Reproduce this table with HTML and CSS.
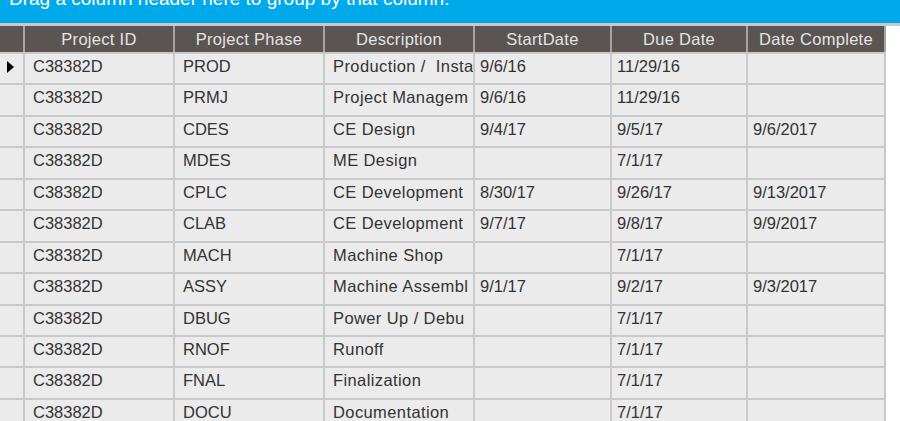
FILE: index.html
```html
<!DOCTYPE html>
<html>
<head>
<meta charset="utf-8">
<link rel="stylesheet" href="styles.css">
</head>
<body>
<div class="group-band"><div class="group-text">Drag a column header here to group by that column.</div></div>
<div class="grid-wrap">
<table class="grid">
<colgroup>
<col class="c-sel"><col class="c-id"><col class="c-phase"><col class="c-desc"><col class="c-start"><col class="c-due"><col class="c-done">
</colgroup>
<thead>
<tr><th></th><th>Project ID</th><th>Project Phase</th><th>Description</th><th>StartDate</th><th>Due Date</th><th>Date Complete</th></tr>
</thead>
<tbody>
<tr><td class="sel"><span class="arrow"></span></td><td><div class="cell pad9">C38382D</div></td><td><div class="cell pad9">PROD</div></td><td><div class="cell pad9 desc">Production /&nbsp; Insta</div></td><td><div class="cell pad6">9/6/16</div></td><td><div class="cell pad6">11/29/16</div></td><td><div class="cell pad6"></div></td></tr>
<tr><td class="sel"></td><td><div class="cell pad9">C38382D</div></td><td><div class="cell pad9">PRMJ</div></td><td><div class="cell pad9 desc">Project Managem</div></td><td><div class="cell pad6">9/6/16</div></td><td><div class="cell pad6">11/29/16</div></td><td><div class="cell pad6"></div></td></tr>
<tr><td class="sel"></td><td><div class="cell pad9">C38382D</div></td><td><div class="cell pad9">CDES</div></td><td><div class="cell pad9 desc">CE Design</div></td><td><div class="cell pad6">9/4/17</div></td><td><div class="cell pad6">9/5/17</div></td><td><div class="cell pad6">9/6/2017</div></td></tr>
<tr><td class="sel"></td><td><div class="cell pad9">C38382D</div></td><td><div class="cell pad9">MDES</div></td><td><div class="cell pad9 desc">ME Design</div></td><td><div class="cell pad6"></div></td><td><div class="cell pad6">7/1/17</div></td><td><div class="cell pad6"></div></td></tr>
<tr><td class="sel"></td><td><div class="cell pad9">C38382D</div></td><td><div class="cell pad9">CPLC</div></td><td><div class="cell pad9 desc">CE Development</div></td><td><div class="cell pad6">8/30/17</div></td><td><div class="cell pad6">9/26/17</div></td><td><div class="cell pad6">9/13/2017</div></td></tr>
<tr><td class="sel"></td><td><div class="cell pad9">C38382D</div></td><td><div class="cell pad9">CLAB</div></td><td><div class="cell pad9 desc">CE Development</div></td><td><div class="cell pad6">9/7/17</div></td><td><div class="cell pad6">9/8/17</div></td><td><div class="cell pad6">9/9/2017</div></td></tr>
<tr><td class="sel"></td><td><div class="cell pad9">C38382D</div></td><td><div class="cell pad9">MACH</div></td><td><div class="cell pad9 desc">Machine Shop</div></td><td><div class="cell pad6"></div></td><td><div class="cell pad6">7/1/17</div></td><td><div class="cell pad6"></div></td></tr>
<tr><td class="sel"></td><td><div class="cell pad9">C38382D</div></td><td><div class="cell pad9">ASSY</div></td><td><div class="cell pad9 desc">Machine Assembl</div></td><td><div class="cell pad6">9/1/17</div></td><td><div class="cell pad6">9/2/17</div></td><td><div class="cell pad6">9/3/2017</div></td></tr>
<tr><td class="sel"></td><td><div class="cell pad9">C38382D</div></td><td><div class="cell pad9">DBUG</div></td><td><div class="cell pad9 desc">Power Up / Debu</div></td><td><div class="cell pad6"></div></td><td><div class="cell pad6">7/1/17</div></td><td><div class="cell pad6"></div></td></tr>
<tr><td class="sel"></td><td><div class="cell pad9">C38382D</div></td><td><div class="cell pad9">RNOF</div></td><td><div class="cell pad9 desc">Runoff</div></td><td><div class="cell pad6"></div></td><td><div class="cell pad6">7/1/17</div></td><td><div class="cell pad6"></div></td></tr>
<tr><td class="sel"></td><td><div class="cell pad9">C38382D</div></td><td><div class="cell pad9">FNAL</div></td><td><div class="cell pad9 desc">Finalization</div></td><td><div class="cell pad6"></div></td><td><div class="cell pad6">7/1/17</div></td><td><div class="cell pad6"></div></td></tr>
<tr><td class="sel"></td><td><div class="cell pad9">C38382D</div></td><td><div class="cell pad9">DOCU</div></td><td><div class="cell pad9 desc">Documentation</div></td><td><div class="cell pad6"></div></td><td><div class="cell pad6">7/1/17</div></td><td><div class="cell pad6"></div></td></tr>
</tbody>
</table>
</div>
</body>
</html>
```

FILE: styles.css
```css
html, body {
  margin: 0;
  padding: 0;
  background: #ffffff;
  font-family: "Liberation Sans", Arial, sans-serif;
  overflow: hidden;
}

.group-band {
  height: 23px;
  background: #00a9e9;
  overflow: hidden;
}

.group-text {
  color: #ffffff;
  font-size: 19px;
  line-height: 22px;
  margin-top: -12px;
  padding-left: 9px;
  white-space: nowrap;
}

.grid-wrap {
  border-top: 3px solid #c9c9c9;
}

.grid {
  table-layout: fixed;
  border-collapse: collapse;
  width: 885px;
  font-size: 16.5px;
}

.c-sel { width: 24px; }
.c-id { width: 150px; }
.c-phase { width: 150px; }
.c-desc { width: 150px; }
.c-start { width: 137px; }
.c-due { width: 136px; }
.c-done { width: 138px; }

.grid th {
  height: 26px;
  padding: 0;
  background: #5a5452;
  color: #e4e4e4;
  font-weight: normal;
  letter-spacing: 0.3px;
  text-align: center;
  border-left: 2px solid #a8a4a3;
  border-right: 2px solid #a8a4a3;
  border-bottom: 2px solid #c9c9c9;
  white-space: nowrap;
  overflow: hidden;
}

.grid th:first-child { border-left: none; }

.grid tbody tr { height: 31.45px; }

.grid td {
  background: #ebebeb;
  color: #333333;
  border: 2px solid #c9c9c9;
  vertical-align: top;
  padding: 0;
}

.grid td:first-child { border-left: none; }

.cell {
  padding-top: 3px;
  white-space: nowrap;
  overflow: hidden;
  line-height: 19px;
}

.desc { letter-spacing: 0.4px; }

.pad9 { padding-left: 8px; }
.pad6 { padding-left: 5px; }

.arrow {
  display: block;
  width: 0;
  height: 0;
  margin: 7px 0 0 7px;
  border-top: 6px solid transparent;
  border-bottom: 6px solid transparent;
  border-left: 7px solid #000000;
}
```
